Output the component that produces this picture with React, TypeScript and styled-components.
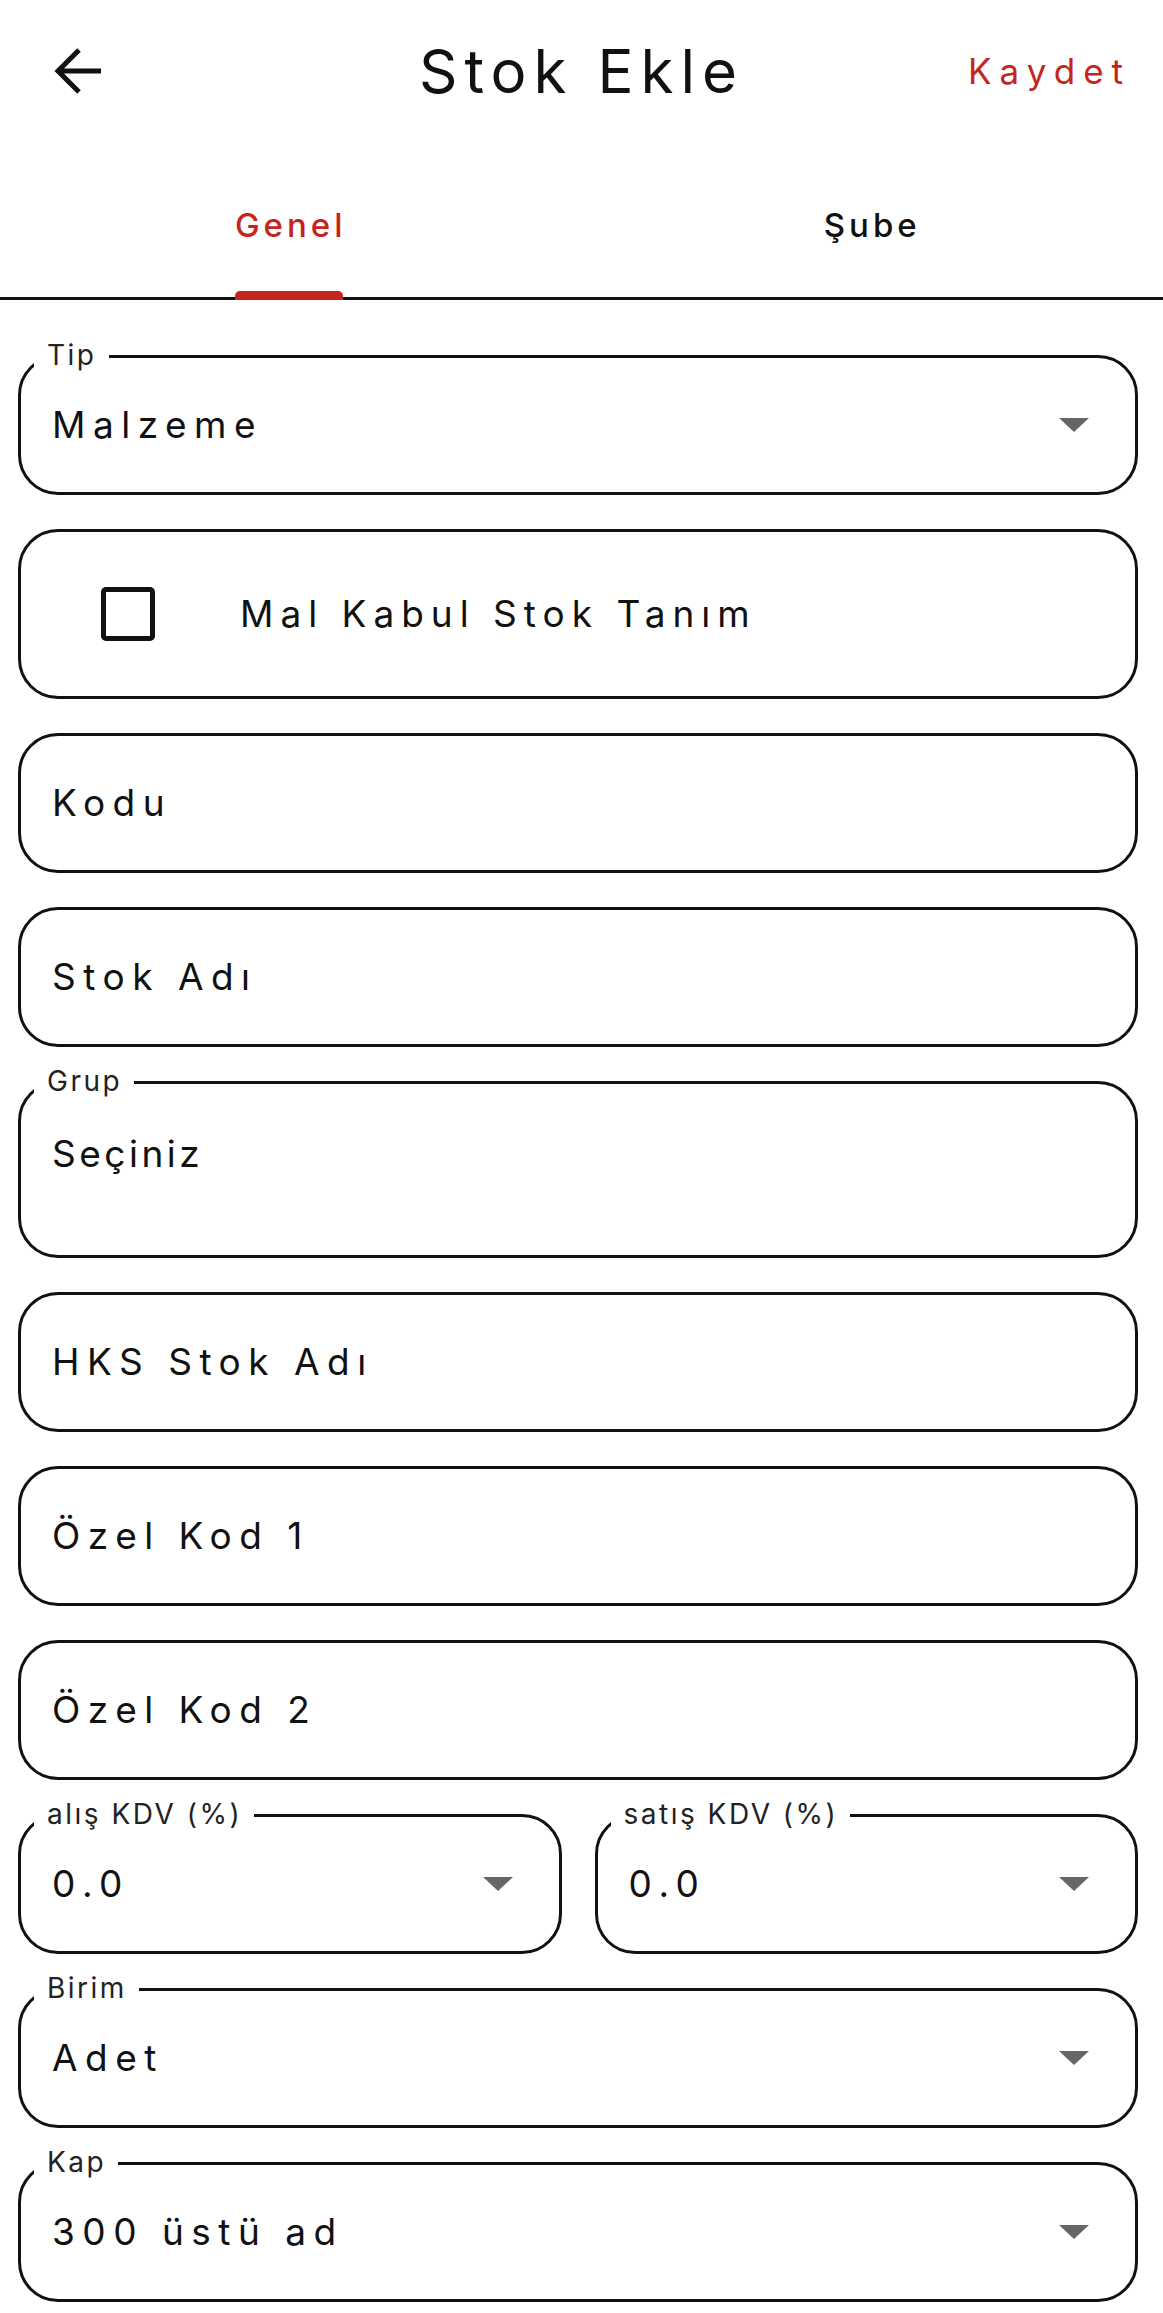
import styled, { createGlobalStyle } from "styled-components";

const GlobalStyle = createGlobalStyle`
    * {
        box-sizing: border-box;
    }
    body {
        margin: 0;
        background: #ffffff;
        font-family: Inter, "Noto Sans", "Liberation Sans", sans-serif;
        color: #111111;
    }
`;

const Page = styled.div`
    width: 1163px;
    min-height: 2313px;
    background: #ffffff;
`;

const Header = styled.header`
    height: 142px;
    display: grid;
    grid-template-columns: 1fr auto 1fr;
    align-items: center;
    padding: 0 32px;
`;

const BackButton = styled.button`
    justify-self: start;
    width: 48px;
    height: 48px;
    margin-left: 22px;
    padding: 0;
    border: none;
    background: none;
    display: flex;
`;

const Title = styled.h1`
    margin: 0;
    font-size: 60px;
    font-weight: 400;
    letter-spacing: 7px;
    color: #111111;
`;

const SaveButton = styled.button`
    justify-self: end;
    border: none;
    background: none;
    padding: 0;
    font-family: inherit;
    font-size: 35px;
    letter-spacing: 8px;
    color: #c5251c;
`;

const TabBar = styled.nav`
    height: 158px;
    display: grid;
    grid-template-columns: 1fr 1fr;
    border-bottom: 3px solid #111111;
`;

const Tab = styled.div`
    display: flex;
    justify-content: center;
    align-items: flex-end;
`;

const TabInner = styled.div`
    display: flex;
    flex-direction: column;
`;

interface TabProps {
    $active?: boolean;
}

const TabLabel = styled.span<TabProps>`
    font-size: 33px;
    line-height: 40px;
    font-weight: 500;
    letter-spacing: 4px;
    color: ${(p) => (p.$active ? "#c5251c" : "#111111")};
`;

const Indicator = styled.span<TabProps>`
    height: 9px;
    margin: 46px 4px -3px 0;
    background: ${(p) => (p.$active ? "#c5251c" : "transparent")};
    border-radius: 5px 5px 0 0;
`;

const Form = styled.main`
    display: flex;
    flex-direction: column;
    gap: 34px;
    padding: 55px 25px 10px 18px;
`;

const Row = styled.div`
    display: grid;
    grid-template-columns: 1fr 1fr;
    gap: 33px;
`;

interface FieldProps {
    $height?: number;
    $top?: boolean;
}

const Field = styled.div<FieldProps>`
    position: relative;
    height: ${(p) => p.$height ?? 140}px;
    border: 3px solid #111111;
    border-radius: 40px;
    display: flex;
    align-items: ${(p) => (p.$top ? "flex-start" : "center")};
    padding: ${(p) => (p.$top ? "48px 46px 0 31px" : "0 46px 0 31px")};
`;

const FieldLabel = styled.span`
    position: absolute;
    top: -17px;
    left: 13px;
    padding: 0 12px 0 13px;
    background: #ffffff;
    font-size: 28px;
    line-height: 28px;
    letter-spacing: 2.5px;
    color: #222222;
`;

interface ValueProps {
    $spacing?: number;
}

const Value = styled.span<ValueProps>`
    font-size: 37px;
    line-height: 44px;
    letter-spacing: ${(p) => p.$spacing ?? 7.5}px;
    color: #111111;
`;

const Caret = styled.svg`
    margin-left: auto;
    flex-shrink: 0;
`;

const CheckRow = styled.label`
    display: flex;
    align-items: center;
    gap: 85px;
    padding-left: 49px;
`;

const CheckBox = styled.span`
    width: 54px;
    height: 54px;
    border: 5px solid #111111;
    border-radius: 5px;
    flex-shrink: 0;
`;

function DropCaret() {
    return (
        <Caret width="30" height="14" viewBox="0 0 30 14">
            <polygon points="0,0 30,0 15,14" fill="#666666" />
        </Caret>
    );
}

interface SelectProps {
    label: string;
    value: string;
}

function SelectField({ label, value }: SelectProps) {
    return (
        <Field>
            <FieldLabel>{label}</FieldLabel>
            <Value>{value}</Value>
            <DropCaret />
        </Field>
    );
}

function TextField({ placeholder }: { placeholder: string }) {
    return (
        <Field>
            <Value>{placeholder}</Value>
        </Field>
    );
}

function App() {
    return (
        <Page>
            <GlobalStyle />
            <Header>
                <BackButton aria-label="Geri">
                    <svg width="48" height="48" viewBox="0 0 48 48">
                        <path
                            d="M25 3 L4 24 L25 45 M4 24 H47"
                            fill="none"
                            stroke="#111111"
                            strokeWidth="5"
                        />
                    </svg>
                </BackButton>
                <Title>Stok Ekle</Title>
                <SaveButton>Kaydet</SaveButton>
            </Header>
            <TabBar>
                <Tab>
                    <TabInner>
                        <TabLabel $active>Genel</TabLabel>
                        <Indicator $active />
                    </TabInner>
                </Tab>
                <Tab>
                    <TabInner>
                        <TabLabel>Şube</TabLabel>
                        <Indicator />
                    </TabInner>
                </Tab>
            </TabBar>
            <Form>
                <SelectField label="Tip" value="Malzeme" />
                <Field $height={170}>
                    <CheckRow>
                        <CheckBox />
                        <Value $spacing={7}>Mal Kabul Stok Tanım</Value>
                    </CheckRow>
                </Field>
                <TextField placeholder="Kodu" />
                <TextField placeholder="Stok Adı" />
                <Field $height={177} $top>
                    <FieldLabel>Grup</FieldLabel>
                    <Value $spacing={3.5}>Seçiniz</Value>
                </Field>
                <TextField placeholder="HKS Stok Adı" />
                <TextField placeholder="Özel Kod 1" />
                <TextField placeholder="Özel Kod 2" />
                <Row>
                    <SelectField label="alış KDV (%)" value="0.0" />
                    <SelectField label="satış KDV (%)" value="0.0" />
                </Row>
                <SelectField label="Birim" value="Adet" />
                <SelectField label="Kap" value="300 üstü ad" />
            </Form>
        </Page>
    );
}

export default App;
